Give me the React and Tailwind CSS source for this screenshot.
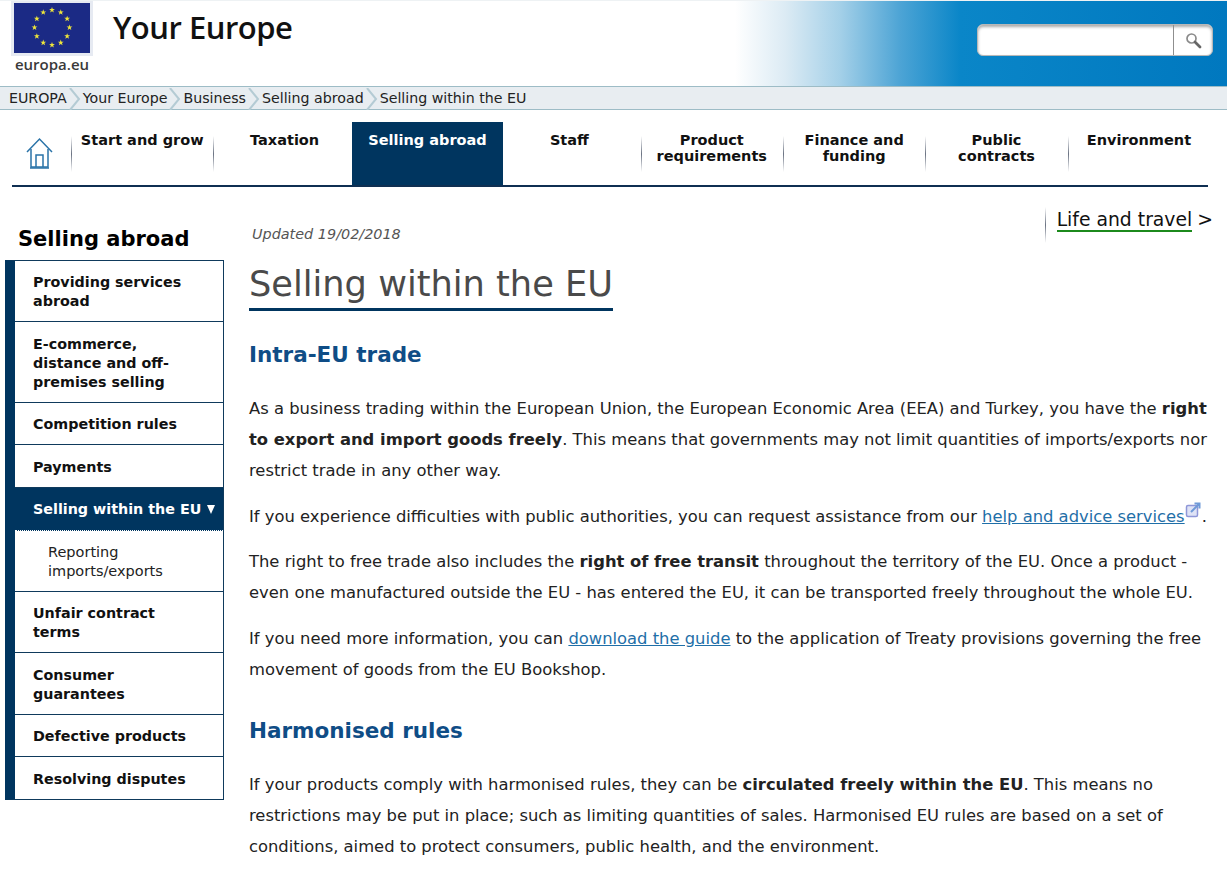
const navItems = [
  ['Start and grow'],
  ['Taxation'],
  ['Selling abroad'],
  ['Staff'],
  ['Product', 'requirements'],
  ['Finance and', 'funding'],
  ['Public', 'contracts'],
  ['Environment'],
];

const crumbs = ['Your Europe', 'Business', 'Selling abroad', 'Selling within the EU'];

const stars = Array.from({ length: 12 }, (_, i) => {
  const a = (i * Math.PI) / 6;
  return { x: 38 + 17.5 * Math.sin(a), y: 24.5 - 17.5 * Math.cos(a) };
});

const Chevron = () => (
  <svg width="12" height="22" viewBox="0 0 12 22" className="shrink-0">
    <path d="M1 0 L10 11 L1 22" fill="none" stroke="#b4cbd4" strokeWidth="2" />
  </svg>
);

const SideItem = ({ children, className = '' }) => (
  <li className={`border-b border-[#0f3a5c] last:border-b-0 pl-[18px] pr-2 text-[14.3px] leading-[19px] font-bold text-[#111] ${className}`}>
    {children}
  </li>
);

const Header = () => (
  <header className="h-[87px] flex justify-between border-b border-[#9dbcc6] bg-[linear-gradient(90deg,#fff_0,#fff_735px,#dcebf4_785px,#a4d0e8_840px,#4da4d5_900px,#0a86c8_960px,#0078bf_1227px)] border-t border-t-[#eef2f4]">
    <div className="flex pl-[11px]">
      <div className="w-[82px]">
        <div className="w-[82px] h-[55px] border-[3px] border-t-2 border-[#e6eaf2] bg-[#1b2a85]">
          <svg width="76" height="49" viewBox="0 0 76 49" className="block">
            {stars.map((s, i) => (
              <polygon
                key={i}
                transform={`translate(${s.x} ${s.y}) scale(3.1)`}
                points="0,-1 0.24,-0.31 0.95,-0.31 0.38,0.12 0.59,0.81 0,0.4 -0.59,0.81 -0.38,0.12 -0.95,-0.31 -0.24,-0.31"
                fill="#eee53a"
              />
            ))}
          </svg>
        </div>
        <div className="-mt-[2px] text-center text-[15px] leading-[20px] font-semibold text-[#3a3a3a] font-['Open_Sans',sans-serif]">europa.eu</div>
      </div>
      <div className="ml-5 mt-[3px] text-[31px] leading-[46px] font-semibold text-[#111] font-['Open_Sans',sans-serif] tracking-[-0.5px]">Your Europe</div>
    </div>
    <div className="mr-[14px] mt-[23px] w-[236px] h-[32px] flex rounded-md bg-white border border-[#b8b8b8] shadow-[inset_0_2px_3px_#aaa]">
      <div className="flex-1 border-r border-[#8f8f8f]" />
      <div className="w-[38px] flex items-center justify-center">
        <svg width="17" height="17" viewBox="0 0 17 17" fill="none">
          <circle cx="6.5" cy="6.5" r="4.5" stroke="#8a8a8a" strokeWidth="1.7" />
          <path d="M10 10 L15 15" stroke="#666" strokeWidth="2.8" strokeLinecap="round" />
        </svg>
      </div>
    </div>
  </header>
);

const Breadcrumb = () => (
  <nav className="h-[23px] flex items-center pl-[9px] pt-px bg-[#e8edf1] border-b border-[#9dbcc6] text-[14.2px] text-[#222]">
    <span>EUROPA</span>
    {crumbs.map(c => (
      <span key={c} className="flex items-center">
        <span className="mx-[2px]"><Chevron /></span>
        <span>{c}</span>
      </span>
    ))}
  </nav>
);

const MainNav = () => (
  <div className="ml-3 mt-3 w-[1196px] h-[65px] flex border-b-2 border-[#0f2f52]">
    <div className="w-[59px] shrink-0 pl-[14px] pt-[15px]">
      <svg width="27" height="32" viewBox="0 0 27 32" fill="none" stroke="#2a73a8" strokeWidth="1.5">
        <path d="M1 15 L13.5 2 L26 15" />
        <path d="M5 12 V30 H22 V12" />
        <path d="M10 30 V18 H17 V30" />
        <path d="M4 31 H23" />
      </svg>
    </div>
    <div className="grid grid-cols-[repeat(8,142.4px)] shrink-0">
      {navItems.map(lines => {
        const active = lines[0] === 'Selling abroad';
        return (
          <div key={lines[0]} className={active ? 'relative z-10 -ml-1 -mr-[5px] bg-[#00355f] text-white text-center pt-[10px]' : 'flex text-[#111]'}>
            {!active && <div className="w-px h-[36px] mt-[14px] bg-gradient-to-b from-transparent via-gray-500 to-transparent" />}
            <div className={`text-[14.5px] leading-[16px] font-bold text-center ${active ? '' : 'flex-1 pt-[10px] pr-px'}`}>
              {lines.map(l => <div key={l}>{l}</div>)}
            </div>
          </div>
        );
      })}
    </div>
  </div>
);

const Sidebar = () => (
  <aside className="w-[219px] ml-[5px] shrink-0">
    <h2 className="pl-[13px] mt-[38px] text-[21px] leading-[28px] font-bold text-black">Selling abroad</h2>
    <ul className="mt-[7px] border-l-[10px] border-l-[#00355f] border-y border-r border-[#0f3a5c]">
      <SideItem className="pt-[12px] pb-[10px]">Providing services abroad</SideItem>
      <SideItem className="pt-[13px] pb-[10px]">E-commerce,<br />distance and off-<br />premises selling</SideItem>
      <SideItem className="pt-[12px] pb-[10px]">Competition rules</SideItem>
      <SideItem className="pt-[13px] pb-[10px]">Payments</SideItem>
      <li className="h-[43px] pl-[18px] pt-[2px] flex items-center gap-[6px] bg-[#00355f] border-b border-dotted border-b-white text-[14.3px] font-bold text-white whitespace-nowrap">
        <span>Selling within the EU</span>
        <span className="w-0 h-0 border-x-[4px] border-x-transparent border-t-[9px] border-t-white mb-[2px]" />
      </li>
      <li className="border-b border-[#0f3a5c] pl-[33px] pt-[12px] pb-[10px] text-[14.5px] leading-[19px] text-[#222]">Reporting<br />imports/exports</li>
      <SideItem className="pt-[12px] pb-[10px]">Unfair contract<br />terms</SideItem>
      <SideItem className="pt-[13px] pb-[10px]">Consumer<br />guarantees</SideItem>
      <SideItem className="pt-[12px] pb-[10px]">Defective products</SideItem>
      <SideItem className="pt-[13px] pb-[10px]">Resolving disputes</SideItem>
    </ul>
  </aside>
);

const Para = ({ children }) => <p className="mb-[14.5px] text-[16.38px] leading-[31px] text-[#222]">{children}</p>;

const Content = () => (
  <main className="ml-[25px] flex-1 pr-[14px]">
    <div className="flex justify-between">
      <div className="pt-[37px] pl-[3px] text-[14.4px] leading-[20px] italic text-[#555]">Updated 19/02/2018</div>
      <div className="flex mt-[20px] h-[36px] text-[#111] text-[18.8px] leading-[26px]">
        <div className="w-px h-[36px] bg-gradient-to-b from-transparent via-gray-500 to-transparent mr-[11px]" />
        <span className="h-[25px] border-b-2 border-[#1c8a1c]">Life and travel</span>
        <span className="ml-[5px]">&gt;</span>
      </div>
    </div>
    <h1 className="inline-block mt-[15px] border-b-[3px] border-[#00355f] text-[35.2px] leading-[49px] text-[#4a4a4a]">Selling within the EU</h1>
    <h2 className="mt-[27px] mb-[21px] text-[21.5px] leading-[34px] font-bold text-[#0f4d86]">Intra-EU trade</h2>
    <Para>As a business trading within the European Union, the European Economic Area (EEA) and Turkey, you have the <b>right to export and import goods freely</b>. This means that governments may not limit quantities of imports/exports nor restrict trade in any other way.</Para>
    <Para>
      If you experience difficulties with public authorities, you can request assistance from our <a className="text-[#1f6fa8] underline">help and advice services</a>
      <svg width="17" height="18" viewBox="0 0 17 18" fill="none" className="inline-block align-[3px]">
        <rect x="1.5" y="4.5" width="11" height="11" rx="1.5" fill="#dfe3f6" stroke="#8f97d8" strokeWidth="1.5" />
        <path d="M6 11 L14 3 M9.5 2.5 H14.5 V7.5" stroke="#6f9ad8" strokeWidth="2" />
      </svg>.
    </Para>
    <Para>The right to free trade also includes the <b>right of free transit</b> throughout the territory of the EU. Once a product - even one manufactured outside the EU - has entered the EU, it can be transported freely throughout the whole EU.</Para>
    <Para>If you need more information, you can <a className="text-[#1f6fa8] underline">download the guide</a> to the application of Treaty provisions governing the free movement of goods from the EU Bookshop.</Para>
    <h2 className="mt-[29px] mb-[21px] text-[21.5px] leading-[34px] font-bold text-[#0f4d86]">Harmonised rules</h2>
    <Para>If your products comply with harmonised rules, they can be <b>circulated freely within the EU</b>. This means no restrictions may be put in place; such as limiting quantities of sales. Harmonised EU rules are based on a set of conditions, aimed to protect consumers, public health, and the environment.</Para>
  </main>
);

export default function App() {
  return (
    <div className="w-[1227px] h-[892px] overflow-hidden bg-white font-['DejaVu_Sans',sans-serif]">
      <Header />
      <Breadcrumb />
      <MainNav />
      <div className="flex">
        <Sidebar />
        <Content />
      </div>
    </div>
  );
}
